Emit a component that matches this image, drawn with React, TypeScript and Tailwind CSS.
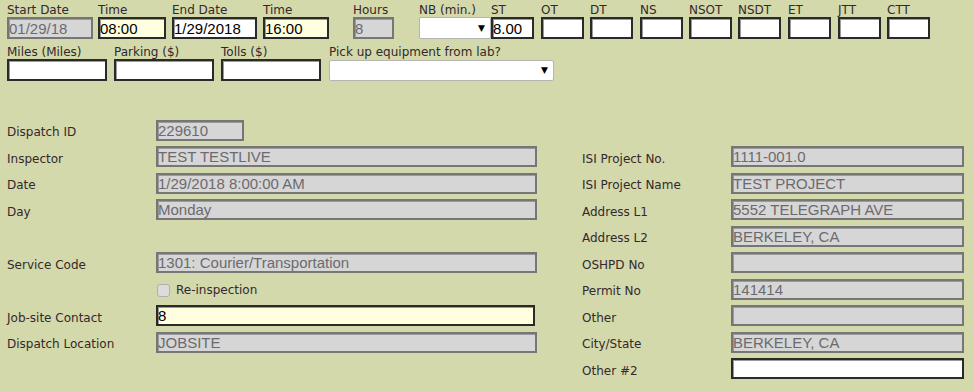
import React from "react";

const LABEL = "font-['DejaVu_Sans',Verdana,sans-serif] text-[12px] text-[#33282d]";
const VALUE = "font-['Liberation_Sans',Arial,sans-serif] text-[15px]";

type Kind = "gray" | "yellow" | "white";

function Box({ kind, value, className }: { kind: Kind; value?: string; className: string }) {
  const skin =
    kind === "gray"
      ? "bg-[#d6d6d6] text-[#6d6a6f] border-[#767676]"
      : kind === "yellow"
        ? "bg-[#ffffe0] text-black border-[#2a2a2a]"
        : "bg-white text-black border-[#2a2a2a]";
  return (
    <div
      className={`${className} ${skin} ${VALUE} flex items-center overflow-hidden whitespace-nowrap border-2 leading-none shadow-[inset_1px_1px_0_#9a9a9a]`}
    >
      {value}
    </div>
  );
}

function Select({ className }: { className: string }) {
  return (
    <div
      className={`${className} flex items-center justify-end rounded-[2px] border border-[#b5b5b5] bg-white pr-[5px]`}
    >
      <span className="font-['DejaVu_Sans',sans-serif] text-[9px] leading-none text-black">▼</span>
    </div>
  );
}

function Field({
  label,
  wrap,
  children,
}: {
  label: string;
  wrap: string;
  children: React.ReactNode;
}) {
  return (
    <div className={`${wrap} flex shrink-0 flex-col`}>
      <div className={`${LABEL} h-[15px] whitespace-nowrap pt-[1px] leading-[15px]`}>{label}</div>
      {children}
    </div>
  );
}

const smallBoxes = [
  { label: "OT", wrap: "w-[49px]" },
  { label: "DT", wrap: "w-[50px]" },
  { label: "NS", wrap: "w-[49px]" },
  { label: "NSOT", wrap: "w-[49px]" },
  { label: "NSDT", wrap: "w-[50px]" },
  { label: "ET", wrap: "w-[50px]" },
  { label: "JTT", wrap: "w-[49px]" },
  { label: "CTT", wrap: "w-[49px]" },
];

function Row({ label, children }: { label?: string; children?: React.ReactNode }) {
  return (
    <div className="flex h-[26.5px] items-center">
      <div className={`${LABEL} w-[149px] shrink-0 whitespace-nowrap pt-[4px]`}>{label}</div>
      {children}
    </div>
  );
}

export default function App() {
  return (
    <div className="h-[391px] w-[974px] overflow-hidden bg-[#d4d9ab] pl-[7px] pt-[2px]">
      {/* Time row */}
      <div className="flex">
        <Field label="Start Date" wrap="w-[91px]">
          <Box kind="gray" value="01/29/18" className="h-[22px] w-[86px]" />
        </Field>
        <Field label="Time" wrap="w-[74px]">
          <Box kind="yellow" value="08:00" className="h-[22px] w-[68px]" />
        </Field>
        <Field label="End Date" wrap="w-[91px]">
          <Box kind="white" value="1/29/2018" className="h-[22px] w-[85px]" />
        </Field>
        <Field label="Time" wrap="w-[90px]">
          <Box kind="yellow" value="16:00" className="h-[22px] w-[66px]" />
        </Field>
        <Field label="Hours" wrap="w-[66px]">
          <Box kind="gray" value="8" className="h-[22px] w-[41px]" />
        </Field>
        <Field label="NB (min.)" wrap="w-[72px]">
          <Select className="h-[22px] w-[72px]" />
        </Field>
        <Field label="ST" wrap="w-[50px]">
          <Box kind="white" value="8.00" className="h-[22px] w-[43px]" />
        </Field>
        {smallBoxes.map((b) => (
          <Field key={b.label} label={b.label} wrap={b.wrap}>
            <Box kind="white" className="h-[22px] w-[43px]" />
          </Field>
        ))}
      </div>

      {/* Expenses row */}
      <div className="mt-[5px] flex">
        <Field label="Miles (Miles)" wrap="w-[107px]">
          <Box kind="white" className="h-[22px] w-[100px]" />
        </Field>
        <Field label="Parking ($)" wrap="w-[107px]">
          <Box kind="white" className="h-[22px] w-[100px]" />
        </Field>
        <Field label="Tolls ($)" wrap="w-[108px]">
          <Box kind="white" className="h-[22px] w-[100px]" />
        </Field>
        <Field label="Pick up equipment from lab?" wrap="w-[225px]">
          <Select className="mt-[1px] h-[21px] w-[225px]" />
        </Field>
      </div>

      {/* Dispatch details */}
      <div className="mt-[36px] flex">
        <div className="w-[575px] shrink-0">
          <Row label="Dispatch ID">
            <Box kind="gray" value="229610" className="h-[21px] w-[88px]" />
          </Row>
          <Row label="Inspector">
            <Box kind="gray" value="TEST TESTLIVE" className="h-[21px] w-[381px]" />
          </Row>
          <Row label="Date">
            <Box kind="gray" value="1/29/2018 8:00:00 AM" className="h-[21px] w-[381px]" />
          </Row>
          <Row label="Day">
            <Box kind="gray" value="Monday" className="h-[21px] w-[381px]" />
          </Row>
          <Row />
          <Row label="Service Code">
            <Box kind="gray" value="1301: Courier/Transportation" className="h-[21px] w-[381px]" />
          </Row>
          <Row>
            <div className="flex items-center gap-[6px] pl-[1px] pt-[2px]">
              <span className="h-[13px] w-[13px] rounded-[3px] border border-[#b0b0b0] bg-[#dcdcdc]" />
              <span className={LABEL}>Re-inspection</span>
            </div>
          </Row>
          <Row label="Job-site Contact">
            <Box kind="yellow" value="8" className="h-[21px] w-[379px]" />
          </Row>
          <Row label="Dispatch Location">
            <Box kind="gray" value="JOBSITE" className="h-[21px] w-[381px]" />
          </Row>
        </div>

        <div className="flex-1">
          <Row />
          <Row label="ISI Project No.">
            <Box kind="gray" value="1111-001.0" className="h-[21px] w-[233px]" />
          </Row>
          <Row label="ISI Project Name">
            <Box kind="gray" value="TEST PROJECT" className="h-[21px] w-[233px]" />
          </Row>
          <Row label="Address L1">
            <Box kind="gray" value="5552 TELEGRAPH AVE" className="h-[21px] w-[233px]" />
          </Row>
          <Row label="Address L2">
            <Box kind="gray" value="BERKELEY, CA" className="h-[21px] w-[233px]" />
          </Row>
          <Row label="OSHPD No">
            <Box kind="gray" className="h-[21px] w-[233px]" />
          </Row>
          <Row label="Permit No">
            <Box kind="gray" value="141414" className="h-[21px] w-[233px]" />
          </Row>
          <Row label="Other">
            <Box kind="gray" className="h-[21px] w-[233px]" />
          </Row>
          <Row label="City/State">
            <Box kind="gray" value="BERKELEY, CA" className="h-[21px] w-[233px]" />
          </Row>
          <Row label="Other #2">
            <Box kind="white" className="h-[21px] w-[233px]" />
          </Row>
        </div>
      </div>
    </div>
  );
}
